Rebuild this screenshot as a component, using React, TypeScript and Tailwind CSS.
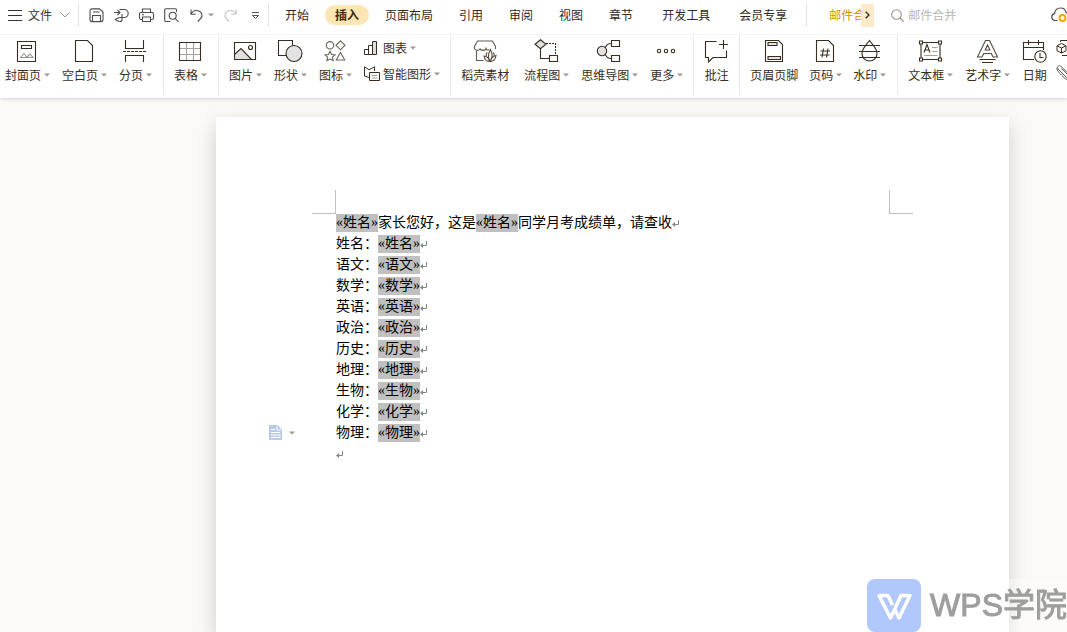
import type { ReactNode } from 'react';

const FIELDS = ['姓名', '语文', '数学', '英语', '政治', '历史', '地理', '生物', '化学', '物理'];

const TABS = [
  { label: '开始', cls: 'mr-4' },
  { label: '插入', cls: 'mr-4', active: true },
  { label: '页面布局', cls: 'mr-[26px]' },
  { label: '引用', cls: 'mr-[26px]' },
  { label: '审阅', cls: 'mr-[26px]' },
  { label: '视图', cls: 'mr-[26px]' },
  { label: '章节', cls: 'mr-[29px]' },
  { label: '开发工具', cls: 'mr-[29px]' },
  { label: '会员专享', cls: 'mr-[19px]' },
];

function Caret({ className = '' }: { className?: string }) {
  return (
    <svg className={`shrink-0 text-[#a3978a] ${className}`} width="6" height="4" viewBox="0 0 6 4" fill="currentColor">
      <path d="M0 .5h6L3 3.5z" />
    </svg>
  );
}

function Small({ children, width = 15 }: { children: ReactNode; width?: number }) {
  return (
    <svg width={width} height="15" viewBox={`0 0 ${width} 15`} fill="none" stroke="currentColor" strokeWidth="1.1">
      {children}
    </svg>
  );
}

function Quick({ label, className = '', children }: { label: string; className?: string; children: ReactNode }) {
  return (
    <button aria-label={label} className={`shrink-0 ${className}`}>
      {children}
    </button>
  );
}

function Group({ className = 'gap-3 pl-[10px] pr-[11px]', last, children }: { className?: string; last?: boolean; children: ReactNode }) {
  return <div className={`flex shrink-0 ${last ? '' : 'border-r border-[#ebe9e6]'} ${className}`}>{children}</div>;
}

function Tool({ label, plain, className = '', children }: { label: string; plain?: boolean; className?: string; children: ReactNode }) {
  return (
    <button className={`flex shrink-0 flex-col items-center pt-1 ${className}`}>
      <svg width="25" height="24" viewBox="0 0 25 24" fill="none" stroke="currentColor" strokeWidth="1.1" className="shrink-0 overflow-visible">
        {children}
      </svg>
      <span className="mt-[2px] flex items-center leading-5 whitespace-nowrap">
        {label}
        {!plain && <Caret className="ml-[3px]" />}
      </span>
    </button>
  );
}

function Header() {
  return (
    <header className="flex h-[34px] items-center overflow-hidden pb-1 whitespace-nowrap">
      <button className="ml-2 flex shrink-0 items-center text-[#333]">
        <Small width={14}>
          <path d="M0 2.5h14M0 7.5h14M0 12.5h14" />
        </Small>
        <span className="ml-[6px]">文件</span>
        <svg className="ml-2 text-[#999]" width="10" height="6" viewBox="0 0 10 6" fill="none" stroke="currentColor">
          <path d="M.5.5 5 5 9.500.5" />
        </svg>
      </button>
      <div className="ml-2 h-6 w-px shrink-0 bg-[#e6e3df]" />
      <div className="ml-[10px] flex shrink-0 items-center gap-[10px] text-[#4f4c4a]">
        <Quick label="保存">
          <Small>
            <path d="M3 .9h7.5L14 4v7.6a2 2 0 0 1-2 2H3a2 2 0 0 1-2-2V3a2 2 0 0 1 2-2.1z" />
            <path d="M3.5 13.5v-6h8v6M4 4h6.5" />
          </Small>
        </Quick>
        <Quick label="输出为PDF">
          <Small>
            <path d="M0 4.500h5.500M3.500 2l2.500 2.500L3.500 7M5.500 1.500h4.700a4 4 0 0 1 0 8H5.500M8 6v5.500a2 2 0 0 1-2 2c-2 0-3-.5-4.500-2 1.500-1.500 3-2 5-2" />
          </Small>
        </Quick>
        <Quick label="打印">
          <Small>
            <path d="M3.500 4.500V1h8v3.500M3.500 11.500H2a1.500 1.500 0 0 1-1.500-1.500V6A1.500 1.500 0 0 1 2 4.500h11A1.500 1.500 0 0 1 14.500 6v4a1.500 1.500 0 0 1-1.500 1.500h-1.500" />
            <path d="M3.500 9h8v4.500h-8zM3 6.800h2" />
          </Small>
        </Quick>
        <Quick label="打印预览">
          <Small>
            <path d="M12.500 4V2a1.200 1.200 0 0 0-1.200-1.200H2A1.200 1.200 0 0 0 .7 2v10.200A1.200 1.200 0 0 0 2 13.500h4.500" />
            <circle cx="8.700" cy="7.700" r="3.500" />
            <path d="m11.200 10.300 3.300 3.700" />
          </Small>
        </Quick>
        <Quick label="撤销">
          <Small>
            <path d="M2 1.500v4.700h4.700M2.200 6A6 6 0 0 1 9 2.700c4 .6 5.300 5.300 2.600 8L8.800 13.500" />
          </Small>
        </Quick>
      </div>
      <Caret className="ml-1" />
      <Quick label="恢复" className="ml-[9px] text-[#c6c4c2]">
        <Small>
          <path d="M13 1.500v4.700H8.300M12.800 6A6 6 0 0 0 6 2.700c-4 .6-5.300 5.300-2.600 8l2.800 2.800" />
        </Small>
      </Quick>
      <Quick label="自定义快速访问" className="ml-[13px] text-[#555]">
        <svg width="9" height="9" viewBox="0 0 9 9" fill="none" stroke="currentColor">
          <path d="M1 1.500h7M1.500 4.500h6l-3 3z" />
        </svg>
      </Quick>
      <div className="ml-2 h-6 w-px shrink-0 bg-[#e6e3df]" />
      <nav className="ml-4 flex shrink-0 items-center">
        {TABS.map(tab => (
          <button
            key={tab.label}
            className={`shrink-0 leading-5 ${tab.cls} ${tab.active ? 'rounded-full bg-[#fde5b4] px-[10px] font-bold text-[#3d2c12]' : ''}`}
          >
            {tab.label}
          </button>
        ))}
      </nav>
      <div className="h-6 w-px shrink-0 bg-[#e6e3df]" />
      <button className="ml-[22px] w-8 shrink-0 overflow-hidden text-left text-[#cf9400]">邮件合并</button>
      <button aria-label="更多选项卡" className="flex h-[23px] w-[13px] shrink-0 items-center justify-center bg-[#fdeacb]">
        <svg width="5" height="8" viewBox="0 0 5 8" fill="none" stroke="#332a20" strokeWidth="1.300">
          <path d="M.7.7 4 4 .7 7.300" />
        </svg>
      </button>
      <label className="ml-[17px] flex min-w-0 flex-1 items-center">
        <svg className="shrink-0" width="13" height="13" viewBox="0 0 13 13" fill="none" stroke="#9d9389" strokeWidth="1.100">
          <circle cx="5.500" cy="5.500" r="4.800" />
          <path d="m9 9 3.700 3.700" />
        </svg>
        <input aria-label="查找命令" placeholder="邮件合并" className="ml-1 w-full min-w-0 bg-transparent outline-none placeholder:text-[#bab7b4]" />
      </label>
      <Quick label="云同步" className="-mr-[3px]">
        <svg width="19" height="16" viewBox="0 0 19 16" fill="none" stroke="#4f4740" strokeWidth="1.200">
          <path d="M6.500 13.500H4A3.500 3.500 0 0 1 3.500 6.600C4 3.300 6.500 1 9.500 1c3 0 5.100 2 5.600 4.700 1.600.3 2.600 1.300 3 2.500" />
          <circle cx="11.500" cy="11" r="3" stroke="#f9a800" strokeWidth="2" />
        </svg>
      </Quick>
    </header>
  );
}

function Ribbon() {
  return (
    <div className="flex h-[64px] overflow-hidden border-t border-[#f4f4f4] pb-[3px] text-[#3a2d20]">
      <Group className="gap-3 pl-[5px] pr-[11px]">
        <Tool label="封面页">
          <path d="M2.500 2.500h18v20h-18zM6.500 6.500h10v3h-10z" />
          <path d="m5.500 18.500 3.500-4 3 4zM12 18l3-3 3 3.500h-6" stroke="#9b958f" />
        </Tool>
        <Tool label="空白页">
          <path d="M3.500 1.500h12l5 5v16h-17z" />
        </Tool>
        <Tool label="分页">
          <path d="M2.500 1v8.500h18V1M2.500 23v-6.500h18V23" />
          <path d="M0 12.500h23" strokeDasharray="3 1" />
        </Tool>
      </Group>
      <Group>
        <Tool label="表格">
          <path d="M2 9.500h20M2 15.500h20M8.500 4v17M15.500 4v17" stroke="#a8a29c" />
          <path d="M1.500 3.500h21v18h-21z" />
        </Tool>
      </Group>
      <Group className="gap-3 px-[10px]">
        <Tool label="图片">
          <path d="m1.500 15.500 6.500-6 10.500 11h-17z" fill="#e2e0df" stroke="none" />
          <path d="m1.500 15.500 6.500-6 10.500 11M1.500 3.500h21v17h-21z" />
          <circle cx="17.500" cy="8.500" r="2" />
        </Tool>
        <Tool label="形状">
          <path d="M.5 1.500h14v15H.5z" />
          <circle cx="16" cy="14.500" r="8" fill="#e2e2e2" />
        </Tool>
        <Tool label="图标">
          <g stroke="#6b625a">
            <circle cx="7" cy="6.300" r="3.700" />
            <path d="m17.500 1.800 4.500 4.500-4.500 4.500L13 6.300z" />
            <path d="m7 12.300 1.500 3.200 3.500.4-2.600 2.300.7 3.400L7 20l-3.100 1.600.7-3.400L2 15.900l3.500-.4z" />
            <path d="m17.500 13.500 4.200 7.500h-8.400z" />
          </g>
        </Tool>
        <div className="flex flex-col pt-1">
          <button className="flex h-[18px] items-center">
            <svg className="shrink-0" width="14" height="15" viewBox="0 0 14 15" fill="none" stroke="currentColor">
              <path d="M.5 8.500h4v5h-4zM4.500 4.500h4v9h-4z" />
              <path d="M8.500.5h4v13h-4z" fill="#ddd" />
            </svg>
            <span className="ml-[5px]">图表</span>
            <Caret className="ml-[3px]" />
          </button>
          <button className="mt-2 flex h-[18px] items-center">
            <svg className="shrink-0 overflow-visible" width="14" height="16" viewBox="0 0 14 16" fill="none" stroke="currentColor">
              <path d="M5 11.500.5 10V.8l4.500 3 5.500-3V5M5.500 6.500h10v8h-10z" />
              <path d="M7.500 9.500h6M7.500 12h6" stroke="#a8a29c" />
            </svg>
            <span className="ml-[5px]">智能图形</span>
            <Caret className="ml-[3px]" />
          </button>
        </div>
      </Group>
      <Group className="gap-3 px-[10px]">
        <Tool label="稻壳素材" plain className="mr-[3px]">
          <path d="M10.500 21.500H3.500V12M1.500 10V7.500l3-5.500h15l3 5.500V10M1.500 9.500c.5 2.500 5 2.500 5.500 0 .7 2.500 5.300 2.500 6 0 .5 1.500 2 2 3 1" stroke="#655b52" />
          <path d="M17 22c-2.500-3.500-2.300-6.500.5-11.500 2.500 5 2.500 8-.5 11.500zM16.500 22.500c-3.500-.2-5-2-5.500-5.500 2.700.3 5 2.500 5.500 5.500zM17.500 22.500c3.500-.2 5-2.500 5.500-6-2.700.8-5 3-5.500 6zM13.500 17c-.5-2 0-3 .7-3.500M21 17c.5-2 0-3-.7-3.500" stroke="#55493e" />
        </Tool>
        <Tool label="流程图">
          <path d="m6.500.7 5.500 4.500-5.500 4.500L1 5.200z" fill="#e2e2e2" />
          <path d="M6.500 10v9.500h9M15.500 16.500h8v6h-8z" />
          <path d="M12 4.500h9.500V16" strokeDasharray="2 1" />
        </Tool>
        <Tool label="思维导图">
          <path d="M14.500 1.500h8v6h-8zM14.500 16.500h8v6h-8zM14.500 4.500c-4 0-5 1.500-6.500 4.500M14.500 19.500c-4 0-5-1.500-6.500-4.500" />
          <circle cx="5" cy="12" r="4.700" fill="#e2e2e2" />
        </Tool>
        <Tool label="更多">
          <circle cx="5" cy="12" r="1.700" />
          <circle cx="12" cy="12" r="1.700" />
          <circle cx="19" cy="12" r="1.700" />
        </Tool>
      </Group>
      <Group className="px-[10px]">
        <Tool label="批注" plain>
          <path d="M12.500 2.500h-11v16h3V23L9 18.500h13.500v-7M15 5.500h9M19.500 1v9" />
        </Tool>
      </Group>
      <Group className="gap-[11px] pl-[10px] pr-[11px]">
        <Tool label="页眉页脚" plain>
          <path d="M3.500 1.500h13l4 4v17h-17z" />
          <path d="M6 3.500h9v3H6zM6 17.500h12.500v3H6z" fill="#e2e2e2" />
        </Tool>
        <Tool label="页码">
          <path d="M3.500 1.500h12l5 5v16h-17zM10.500 9.500l-1.500 9M15 9.500l-1.500 9M7.500 12h9.500M7 16h9.500" />
        </Tool>
        <Tool label="水印">
          <path d="M12.500 1.500c3 4.500 7.500 8 7.500 13a7.500 7.500 0 0 1-15 0c0-5 4.500-8.500 7.500-13zM2 6.500h21M2 12.500h21M2 18.500h21" />
        </Tool>
      </Group>
      <Group last className="gap-3 pl-[10px]">
        <Tool label="文本框">
          <path d="M3 3.500h19v17H3z" />
          <path d="M1.500 2h3v3h-3zM20.500 2h3v3h-3zM1.500 19h3v3h-3zM20.500 19h3v3h-3z" fill="#fff" />
          <path d="m6 13.500 3-8 3 8M7 11h4" />
          <path d="M14 8.500h5.500M14 12.500h5.500M6 16.500h13.500" stroke="#a8a29c" />
        </Tool>
        <Tool label="艺术字">
          <path d="M10.500 1.500h4L22.500 18H18l-1.700-3.500H8.700L7 18H2.500zM12.500 6l-2.300 5h4.600z" stroke="#55493e" />
          <path d="M4.500 20.500h16M7 23.500h11" />
        </Tool>
        <Tool label="日期" plain>
          <path d="M12 20.500H1.500v-17h20V11M1.500 8.500h20M6.500 1v5M16.500 1v5" />
          <circle cx="18.500" cy="17.500" r="5.700" fill="#fff" />
          <path d="M18 14v4.500h3.500" />
        </Tool>
        <div className="-ml-[3px] flex flex-col gap-2 pt-[5px]">
          <button aria-label="对象">
            <svg width="16" height="16" viewBox="0 0 16 16" fill="none" stroke="currentColor">
              <path d="m5.500 3.500 4.500 2.300v5L5.500 13 1 10.800v-5zM1 5.800l4.500 2.200L10 5.800M5.500 8v5M4.500 2V.5H15v15H6" />
            </svg>
          </button>
          <button aria-label="附件">
            <svg width="16" height="16" viewBox="0 0 16 16" fill="none" stroke="#655b52">
              <path d="m5.500 4.500 6.500 6.500c1.500 1.700-.5 3.500-2 2L2 5C.5 3 3 .5 5 2.500l9 8.500M1 3.500C.5 7 4.500 10 8.500 14c3 3 7 0 5.500-3" />
            </svg>
          </button>
        </div>
      </Group>
    </div>
  );
}

function MergeField({ name }: { name: string }) {
  return <span className="inline-block h-[18px] bg-[#c0c0c0] align-middle leading-[18px]">«{name}»</span>;
}

function Return() {
  return (
    <svg className="inline-block align-middle" width="8" height="8" viewBox="0 0 8 8" fill="none" stroke="#858585">
      <path d="M6.500 1v4.500H2" />
      <path d="M0 5.500 3 3v5z" fill="#858585" stroke="none" />
    </svg>
  );
}

export default function App() {
  return (
    <div className="flex min-h-screen flex-col overflow-hidden bg-[#faf9f5] font-['Noto_Sans_CJK_SC',sans-serif] text-xs text-[#2f2a26]">
      <div className="relative z-10 bg-white shadow-[0_1px_3px_rgba(0,0,0,0.16)]">
        <Header />
        <Ribbon />
      </div>

      <main className="flex flex-1 flex-col pt-[19px] pr-[58px] pl-[216px]">
        <article className="relative flex-1 bg-white px-24 pt-[73px] shadow-[0_8px_18px_rgba(0,0,0,0.18)]">
          <div className="flex justify-between">
            <div className="size-6 border-r border-b border-[#bfbfbf]" />
            <div className="size-6 border-b border-l border-[#bfbfbf]" />
          </div>
          <div className="-mt-[2px] px-6 font-['Liberation_Serif','Noto_Sans_CJK_SC',serif] text-sm leading-[21px] text-black">
            <p className="flex h-[21px] items-center whitespace-nowrap">
              <MergeField name="姓名" />
              家长您好，这是
              <MergeField name="姓名" />
              同学月考成绩单，请查收
              <Return />
            </p>
            {FIELDS.map(name => (
              <p key={name} className="relative flex h-[21px] items-center">
                {name}：
                <MergeField name={name} />
                <Return />
                {name === '物理' && (
                  <button aria-label="段落布局" className="absolute -left-[67px] flex items-center gap-[7px]">
                    <svg width="13" height="15" viewBox="0 0 13 15" fill="none">
                      <path d="M0 0h8.500L13 4.500V15H0z" fill="#b7cae8" />
                      <path d="M8 1v4h4M2 4.500h4M2 7.500h9M2 10h9v2.500H2" stroke="#fff" />
                    </svg>
                    <Caret />
                  </button>
                )}
              </p>
            ))}
            <p className="flex h-[21px] items-center">
              <Return />
            </p>
          </div>
        </article>
      </main>

      <div className="fixed right-0 bottom-0 z-20 flex h-[53px] items-center bg-white/40">
        <svg width="54" height="53" viewBox="0 0 54 53" fill="none">
          <rect width="54" height="53" rx="8" fill="#b0c8fb" />
          <path
            d="M22 16.500H12L23.500 39 34 16.500h9L32 39l-4.500-9M21 16.500l4.500 9.500"
            stroke="#fff"
            strokeWidth="3.500"
            strokeLinejoin="round"
          />
        </svg>
        <span className="ml-[9px] font-['Liberation_Sans','Noto_Sans_CJK_SC',sans-serif] text-[32px] leading-[53px] text-[#9e9e9e] [-webkit-text-stroke:1px_#9e9e9e]">WPS学院</span>
      </div>
    </div>
  );
}
